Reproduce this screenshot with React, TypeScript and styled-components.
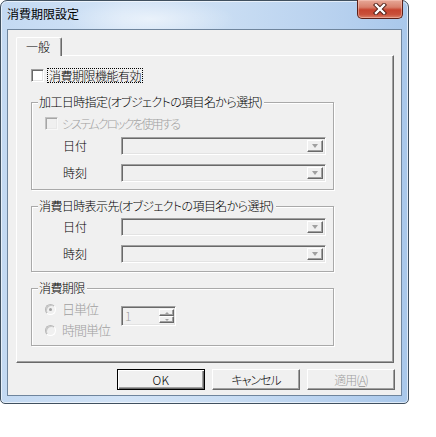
import React from "react";
import styled, { createGlobalStyle } from "styled-components";

const Global = createGlobalStyle`
  html, body { margin: 0; padding: 0; background: #ffffff; }
  body {
    font-family: "Noto Sans CJK JP", "Noto Sans", sans-serif;
    font-size: 12px;
    font-weight: 300;
    color: #000;
  }
  * { box-sizing: border-box; }
`;

const Window = styled.div`
  width: 409px;
  height: 404px;
  border: 1px solid #40505f;
  border-radius: 7px 7px 5px 5px;
  background:
    radial-gradient(ellipse 120px 30px at 150px 18px, rgba(255,255,255,0.55), rgba(255,255,255,0) 70%),
    linear-gradient(90deg, #c3d9f2 0%, #d2e3f6 30%, #c9ddf3 55%, #b9d2ef 80%, #a9c8eb 100%);
  box-shadow: inset 0 0 0 1px rgba(255, 255, 255, 0.6);
  display: flex;
  flex-direction: column;
`;

const TitleBar = styled.div`
  height: 28px;
  display: flex;
  align-items: flex-start;
  justify-content: space-between;
  padding-left: 6px;
  padding-right: 5px;
`;

const TitleText = styled.span`
  margin-top: 6px;
  font-size: 12px;
  line-height: 14px;
  color: #000;
  font-weight: 400;
`;

const CloseButton = styled.div`
  width: 46px;
  height: 19px;
  margin-top: -1px;
  border: 1px solid #5c2018;
  border-top: none;
  border-radius: 0 0 5px 5px;
  background: linear-gradient(180deg, #e7a998 0%, #d8806c 40%, #c6442f 55%, #c9503a 80%, #d9826a 100%);
  box-shadow: inset 0 0 0 1px rgba(255, 210, 200, 0.45);
  display: flex;
  align-items: center;
  justify-content: center;
`;

const Client = styled.div`
  margin: 0 6px 7px 6px;
  flex: 1;
  border: 1px solid #6f859d;
  background: #f0f0f0;
  display: flex;
  flex-direction: column;
  padding: 7px 0 0 8px;
`;

const TabStrip = styled.div`
  display: flex;
  height: 18px;
`;

const Tab = styled.div`
  position: relative;
  z-index: 1;
  width: 46px;
  height: 19px;
  margin-bottom: -1px;
  background: #f0f0f0;
  border-top: 1px solid #ffffff;
  border-left: 1px solid #ffffff;
  border-right: 1px solid #696969;
  box-shadow: inset -1px 0 #a0a0a0;
  border-radius: 2px 2px 0 0;
  padding-left: 9px;
  padding-top: 2px;
  line-height: 14px;
`;

const Panel = styled.div`
  width: 378px;
  height: 308px;
  border-top: 1px solid #ffffff;
  border-left: 1px solid #ffffff;
  border-right: 1px solid #696969;
  border-bottom: 1px solid #696969;
  box-shadow: inset -1px -1px #a0a0a0;
  display: flex;
  flex-direction: column;
  padding-left: 14px;
  padding-top: 12px;
`;

const CheckRow = styled.div<{ $indent?: number; $top?: number }>`
  display: flex;
  align-items: center;
  height: 15px;
  margin-left: ${(p) => p.$indent ?? 0}px;
  margin-top: ${(p) => p.$top ?? 0}px;
`;

const Box = styled.span<{ $disabled?: boolean }>`
  width: 13px;
  height: 13px;
  flex: none;
  border: 1px solid;
  border-color: #a0a0a0 #ffffff #ffffff #a0a0a0;
  box-shadow: inset 1px 1px #696969, inset -1px -1px #e3e3e3;
  background: ${(p) => (p.$disabled ? "#f0f0f0" : "#ffffff")};
  opacity: ${(p) => (p.$disabled ? 0.55 : 1)};
`;

const FocusLabel = styled.span`
  margin-left: 3px;
  padding: 0 1px;
  border: 1px dotted #000;
  line-height: 13px;
  letter-spacing: -0.5px;
`;

const Label = styled.span<{ $disabled?: boolean }>`
  margin-left: 4px;
  line-height: 14px;
  color: ${(p) => (p.$disabled ? "#a0a0a0" : "#000")};
  font-feature-settings: "palt";
  letter-spacing: -2px;
  white-space: nowrap;
`;

const Group = styled.fieldset<{ $top: number; $pb: number }>`
  margin: ${(p) => p.$top}px 0 0 0;
  width: 303px;
  border: 1px solid #a9a9a9;
  box-shadow: 1px 1px #ffffff, inset 1px 1px #ffffff;
  padding: 0 0 ${(p) => p.$pb}px 0;
  min-width: 0;
`;

const Legend = styled.legend`
  margin-left: 6px;
  padding: 0 2px 0 1px;
  line-height: 14px;
  font-feature-settings: "palt";
  letter-spacing: -0.6px;
  white-space: nowrap;
  background: #f0f0f0;
`;

const FieldRow = styled.div<{ $top: number }>`
  display: grid;
  grid-template-columns: 58px 205px;
  align-items: center;
  margin-top: ${(p) => p.$top}px;
  padding-left: 31px;
  height: 18px;
`;

const FieldLabel = styled.span`
  line-height: 14px;
`;

const Combo = styled.div`
  width: 205px;
  height: 18px;
  border: 1px solid;
  border-color: #a0a0a0 #ffffff #ffffff #a0a0a0;
  box-shadow: inset 1px 1px #696969, inset -1px -1px #e3e3e3;
  background: #f0f0f0;
  display: flex;
  justify-content: flex-end;
  padding: 2px;
`;

const DropButton = styled.div`
  width: 16px;
  height: 12px;
  border: 1px solid;
  border-color: #ffffff #696969 #696969 #ffffff;
  box-shadow: inset -1px -1px #a0a0a0;
  background: #f0f0f0;
  display: flex;
  align-items: center;
  justify-content: center;
`;

const Triangle = styled.span`
  width: 0;
  height: 0;
  border-left: 3.5px solid transparent;
  border-right: 3.5px solid transparent;
  border-top: 4px solid #a0a0a0;
`;

const LimitBody = styled.div`
  display: flex;
  margin-top: 6px;
  padding-left: 13px;
`;

const RadioCol = styled.div`
  display: flex;
  flex-direction: column;
  gap: 5px;
  width: 76px;
`;

const RadioRow = styled.div`
  display: flex;
  align-items: center;
  height: 16px;
`;

const Radio = styled.span<{ $checked?: boolean }>`
  width: 11px;
  height: 11px;
  flex: none;
  border-radius: 50%;
  border: 1px solid;
  border-color: #b8b8b8 #ffffff #ffffff #b8b8b8;
  background: #f0f0f0;
  box-shadow: inset 1px 1px #c8c8c8;
  display: flex;
  align-items: center;
  justify-content: center;
  &::after {
    content: "";
    width: 3px;
    height: 3px;
    border-radius: 50%;
    background: ${(p) => (p.$checked ? "#a0a0a0" : "transparent")};
  }
`;

const RadioText = styled.span`
  margin-left: 6px;
  color: #a0a0a0;
  font-size: 13px;
  letter-spacing: -1px;
  line-height: 16px;
`;

const Spin = styled.div`
  margin-top: 5px;
  width: 55px;
  height: 20px;
  border: 1px solid;
  border-color: #a0a0a0 #ffffff #ffffff #a0a0a0;
  box-shadow: inset 1px 1px #696969, inset -1px -1px #e3e3e3;
  background: #f0f0f0;
  display: flex;
  align-items: stretch;
  padding: 2px 1px 2px 3px;
`;

const SpinValue = styled.span`
  flex: 1;
  color: #a0a0a0;
  line-height: 14px;
  font-size: 12px;
`;

const SpinButtons = styled.div`
  width: 15px;
  display: flex;
  flex-direction: column;
`;

const SpinButton = styled.div`
  flex: 1;
  border: 1px solid;
  border-color: #ffffff #696969 #696969 #ffffff;
  box-shadow: inset -1px -1px #a0a0a0;
  background: #f0f0f0;
  display: flex;
  align-items: center;
  justify-content: center;
`;

const Arrow = styled.span<{ $up?: boolean }>`
  width: 0;
  height: 0;
  border-left: 2px solid transparent;
  border-right: 2px solid transparent;
  ${(p) => (p.$up ? "border-bottom: 2px solid #a0a0a0;" : "border-top: 2px solid #a0a0a0;")}
`;

const ButtonRow = styled.div`
  display: flex;
  justify-content: flex-end;
  gap: 7px;
  margin-top: 6px;
  margin-right: 6px;
`;

const Button = styled.div<{ $default?: boolean; $disabled?: boolean }>`
  width: 88px;
  height: 21px;
  display: flex;
  align-items: center;
  justify-content: center;
  background: #f0f0f0;
  border: 1px solid;
  border-color: ${(p) => (p.$default ? "#000" : "#ffffff #696969 #696969 #ffffff")};
  box-shadow: ${(p) =>
    p.$default
      ? "inset 1px 1px #ffffff, inset -1px -1px #696969, inset -2px -2px #a0a0a0"
      : "inset -1px -1px #a0a0a0"};
  color: ${(p) => (p.$disabled ? "#a0a0a0" : "#000")};
  font-size: 12px;
  line-height: 14px;
  font-feature-settings: "palt";
  letter-spacing: -1px;
`;

const Ok = styled.span`
  font-size: 12px;
  letter-spacing: 0.5px;
`;

const Mnemonic = styled.span`
  text-decoration: underline;
`;

function CloseGlyph() {
  return (
    <svg width="14" height="12" viewBox="0 0 14 12">
      <path d="M3 2 L11 10 M11 2 L3 10" stroke="#4a1a12" strokeWidth="4.2" strokeLinecap="square" />
      <path d="M3 2 L11 10 M11 2 L3 10" stroke="#ffffff" strokeWidth="2.4" strokeLinecap="square" />
    </svg>
  );
}

function ComboBox() {
  return (
    <Combo>
      <DropButton>
        <Triangle />
      </DropButton>
    </Combo>
  );
}

export default function App() {
  return (
    <>
      <Global />
      <Window>
        <TitleBar>
          <TitleText>消費期限設定</TitleText>
          <CloseButton>
            <CloseGlyph />
          </CloseButton>
        </TitleBar>
        <Client>
          <TabStrip>
            <Tab>一般</Tab>
          </TabStrip>
          <Panel>
            <CheckRow>
              <Box />
              <FocusLabel>消費期限機能有効</FocusLabel>
            </CheckRow>
            <Group $top={12} $pb={7}>
              <Legend>加工日時指定(オブジェクトの項目名から選択)</Legend>
              <CheckRow $indent={13} $top={7}>
                <Box $disabled />
                <Label $disabled>システムクロックを使用する</Label>
              </CheckRow>
              <FieldRow $top={6}>
                <FieldLabel>日付</FieldLabel>
                <ComboBox />
              </FieldRow>
              <FieldRow $top={9}>
                <FieldLabel>時刻</FieldLabel>
                <ComboBox />
              </FieldRow>
            </Group>
            <Group $top={9} $pb={8}>
              <Legend>消費日時表示先(オブジェクトの項目名から選択)</Legend>
              <FieldRow $top={5}>
                <FieldLabel>日付</FieldLabel>
                <ComboBox />
              </FieldRow>
              <FieldRow $top={9}>
                <FieldLabel>時刻</FieldLabel>
                <ComboBox />
              </FieldRow>
            </Group>
            <Group $top={9} $pb={7}>
              <Legend>消費期限</Legend>
              <LimitBody>
                <RadioCol>
                  <RadioRow>
                    <Radio $checked />
                    <RadioText>日単位</RadioText>
                  </RadioRow>
                  <RadioRow>
                    <Radio />
                    <RadioText>時間単位</RadioText>
                  </RadioRow>
                </RadioCol>
                <Spin>
                  <SpinValue>1</SpinValue>
                  <SpinButtons>
                    <SpinButton>
                      <Arrow $up />
                    </SpinButton>
                    <SpinButton>
                      <Arrow />
                    </SpinButton>
                  </SpinButtons>
                </Spin>
              </LimitBody>
            </Group>
          </Panel>
          <ButtonRow>
            <Button $default>
              <Ok>OK</Ok>
            </Button>
            <Button>キャンセル</Button>
            <Button $disabled>
              適用(<Mnemonic>A</Mnemonic>)
            </Button>
          </ButtonRow>
        </Client>
      </Window>
    </>
  );
}
